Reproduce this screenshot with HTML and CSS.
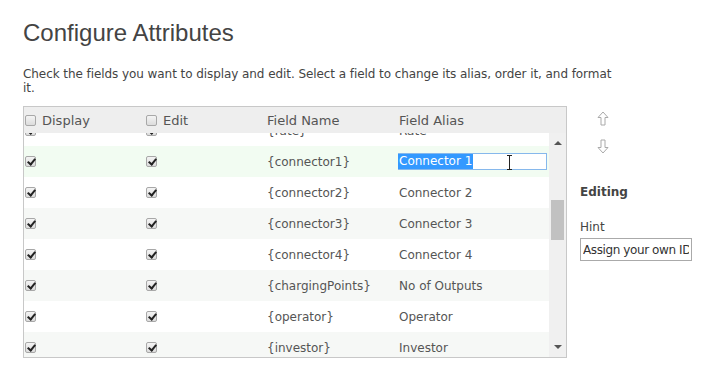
FILE: index.html
```html
<!DOCTYPE html>
<html lang="en">
<head>
  <meta charset="UTF-8">
  <title>Configure Attributes</title>
  <link rel="stylesheet" href="styles.css">
</head>
<body>
  <div class="page">
    <h1>Configure Attributes</h1>
    <p class="intro">Check the fields you want to display and edit. Select a field to change its alias, order it, and format it.</p>

    <div class="layout">
      <div class="grid">
        <div class="grid-head">
          <div class="cell c-display"><input type="checkbox" class="chk"> Display</div>
          <div class="cell c-edit"><input type="checkbox" class="chk"> Edit</div>
          <div class="cell c-name">Field Name</div>
          <div class="cell c-alias">Field Alias</div>
          <div class="cell c-gap"></div>
        </div>
        <div class="grid-body">
          <div class="viewport">
            <div class="rows" id="rows"></div>
          </div>
          <div class="scrollbar">
            <span class="sb-arrow up"></span>
            <div class="sb-track"><span class="sb-thumb"></span></div>
            <span class="sb-arrow down"></span>
          </div>
        </div>
      </div>

      <div class="side">
        <div class="order">
          <svg width="12" height="15" viewBox="0 0 12 15"><path d="M6 1 L11 6.5 L8 6.5 L8 14 L4 14 L4 6.5 L1 6.5 Z" fill="#fff" stroke="#aaa" stroke-width="1"/></svg>
          <svg width="12" height="15" viewBox="0 0 12 15"><path d="M6 14 L11 8.5 L8 8.5 L8 1 L4 1 L4 8.5 L1 8.5 Z" fill="#fff" stroke="#aaa" stroke-width="1"/></svg>
        </div>
        <div class="editing">Editing</div>
        <label class="hint-label" for="hint">Hint</label>
        <input type="text" id="hint" class="hint" value="Assign your own ID">
      </div>
    </div>
  </div>

  <script>
    const fields = [
      { name: '{rate}', alias: 'Rate' },
      { name: '{connector1}', alias: 'Connector 1', active: true },
      { name: '{connector2}', alias: 'Connector 2' },
      { name: '{connector3}', alias: 'Connector 3' },
      { name: '{connector4}', alias: 'Connector 4' },
      { name: '{chargingPoints}', alias: 'No of Outputs' },
      { name: '{operator}', alias: 'Operator' },
      { name: '{investor}', alias: 'Investor' }
    ];

    const rows = document.getElementById('rows');
    fields.forEach((f, i) => {
      const row = document.createElement('div');
      row.className = 'row' + (i % 2 === 1 ? ' alt' : '') + (f.active ? ' active' : '');
      const alias = f.active
        ? `<span class="alias-edit"><span class="sel">${f.alias}</span><span class="ibeam"></span></span>`
        : f.alias;
      row.innerHTML = `
        <div class="cell c-display"><input type="checkbox" class="chk" checked></div>
        <div class="cell c-edit"><input type="checkbox" class="chk" checked></div>
        <div class="cell c-name">${f.name}</div>
        <div class="cell c-alias">${alias}</div>
      `;
      rows.appendChild(row);
    });
  </script>
</body>
</html>
```

FILE: styles.css
```css
body {
  margin: 0;
  font-family: 'DejaVu Sans', Verdana, sans-serif;
  font-size: 12px;
  color: #444;
  background: #fff;
}

.page {
  padding: 19px 0 0 23px;
}

h1 {
  font-family: 'Liberation Sans', Arial, sans-serif;
  font-weight: normal;
  font-size: 24px;
  color: #444;
  margin: 0 0 20px;
}

.intro {
  width: 592px;
  margin: 0 0 11px;
  line-height: 14px;
  letter-spacing: -0.07px;
  color: #444;
}

.layout {
  display: flex;
  align-items: flex-start;
}

.grid {
  width: 542px;
  border: 1px solid #c8c8c8;
}

.grid-head {
  display: flex;
  height: 26px;
  align-items: center;
  background: #eee;
  color: #555;
  font-size: 13px;
}

.cell {
  display: flex;
  align-items: center;
  white-space: nowrap;
  overflow: hidden;
}

.c-display { width: 120px; padding-left: 1px; }
.c-edit { width: 120px; padding-left: 1px; }
.c-name { width: 131px; padding-left: 1px; }
.c-alias { width: 150px; padding-left: 1px; }
.c-gap { flex: 1; }

.grid-head .chk { margin-right: 6px; }

.chk {
  appearance: none;
  -webkit-appearance: none;
  width: 11px;
  height: 11px;
  margin: 0;
  border: 1px solid #a8a8a8;
  border-radius: 2px;
  background: linear-gradient(#f4f4f4, #dcdcdc);
  position: relative;
  flex-shrink: 0;
}

.chk:checked::after {
  content: '';
  position: absolute;
  left: 3px;
  top: 0px;
  width: 3px;
  height: 6px;
  border: solid #222;
  border-width: 0 2px 2px 0;
  transform: rotate(40deg);
}

.grid-body {
  display: flex;
  height: 224px;
}

.viewport {
  flex: 1;
  overflow: hidden;
}

.rows {
  margin-top: -18px;
}

.row {
  display: flex;
  height: 31px;
  color: #555;
  font-size: 12px;
}

.row.alt { background: #f6f8f6; }
.row.active { background: #f2fcf2; }

.alias-edit {
  display: flex;
  align-items: center;
  width: 148px;
  height: 15px;
  border: 1px solid #86b8ec;
  margin-left: -2px;
  background: #fff;
  position: relative;
}

.sel {
  background: #3399ff;
  color: #fff;
  padding: 0 1px;
  line-height: 15px;
}

.ibeam {
  position: absolute;
  left: 111px;
  top: 1px;
  width: 1px;
  height: 15px;
  background: #222;
}

.ibeam::before,
.ibeam::after {
  content: '';
  position: absolute;
  left: -2px;
  width: 5px;
  height: 1px;
  background: #222;
}

.ibeam::before { top: 0; }
.ibeam::after { bottom: 0; }

.scrollbar {
  width: 17px;
  background: #f0f0f0;
  display: flex;
  flex-direction: column;
  align-items: center;
}

.sb-arrow {
  width: 0;
  height: 0;
  border-left: 4px solid transparent;
  border-right: 4px solid transparent;
}

.sb-arrow.up {
  border-bottom: 4px solid #555;
  margin-top: 8px;
}

.sb-arrow.down {
  border-top: 4px solid #555;
  margin-bottom: 8px;
}

.sb-track {
  flex: 1;
  width: 100%;
  display: flex;
  justify-content: center;
}

.sb-thumb {
  width: 13px;
  height: 40px;
  margin-top: 55px;
  background: #c1c1c1;
}

.side {
  display: flex;
  flex-direction: column;
  padding-left: 13px;
}

.order {
  display: flex;
  flex-direction: column;
  gap: 13px;
  padding: 5px 0 0 17px;
}

.editing {
  font-weight: bold;
  color: #444;
  font-size: 12px;
  margin-top: 31px;
}

.hint-label {
  color: #444;
  font-size: 12px;
  margin-top: 21px;
}

.hint {
  width: 106px;
  height: 21px;
  margin-top: 4px;
  padding: 0 2px;
  border: 1px solid #aaa;
  font-family: 'DejaVu Sans', Verdana, sans-serif;
  font-size: 12px;
  letter-spacing: -0.4px;
  color: #333;
  outline: none;
}
```
